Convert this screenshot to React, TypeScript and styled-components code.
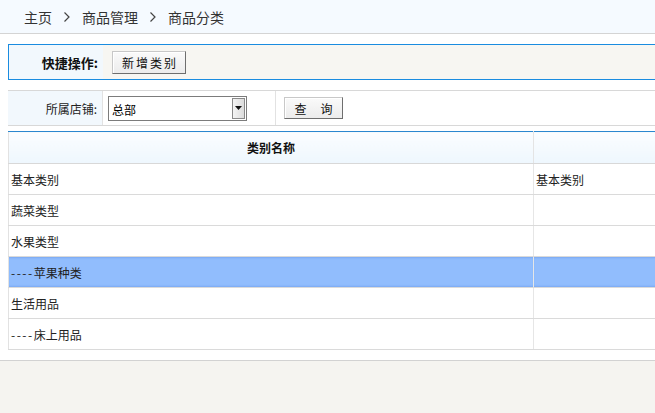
import styled, { createGlobalStyle } from "styled-components";

const GlobalStyle = createGlobalStyle`
  html, body {
    margin: 0;
    padding: 0;
    background: #f5f4f0;
    overflow: hidden;
  }
  body {
    font-family: "Noto Sans CJK SC", "Noto Sans", sans-serif;
    font-size: 12px;
    color: #222;
  }
`;

const categories = [
  { name: "基本类别", parent: "基本类别" },
  { name: "蔬菜类型", parent: "" },
  { name: "水果类型", parent: "" },
  { name: "苹果种类", level: 1, parent: "", selected: true },
  { name: "生活用品", parent: "" },
  { name: "床上用品", level: 1, parent: "" },
];

const Chevron = () => (
  <svg width="8" height="12" viewBox="0 0 8 12">
    <polyline points="1.5,1.5 6,6 1.5,10.5" fill="none" stroke="#444" strokeWidth="1.2" />
  </svg>
);

const App = () => {
  return (
    <>
      <GlobalStyle />
      <Page>
        <Breadcrumb>
          <Crumb>主页</Crumb>
          <Sep>
            <Chevron />
          </Sep>
          <Crumb>商品管理</Crumb>
          <Sep>
            <Chevron />
          </Sep>
          <Crumb>商品分类</Crumb>
        </Breadcrumb>

        <Content>
          <QuickBar>
            <QuickLabel>快捷操作:</QuickLabel>
            <QuickBody>
              <Button $width={74} $height={23}>新增类别</Button>
            </QuickBody>
          </QuickBar>

          <SearchBar>
            <SearchLabel>所属店铺:</SearchLabel>
            <SearchCell $width={173}>
              <FakeSelect>
                <SelectText>总部</SelectText>
                <SelectArrow>
                  <svg width="7" height="4" viewBox="0 0 7 4">
                    <polygon points="0,0 7,0 3.5,4" fill="#111" />
                  </svg>
                </SelectArrow>
              </FakeSelect>
            </SearchCell>
            <SearchCell $width={200} $pad={8}>
              <Button $width={59} $height={22} $spacing={1}>查　询</Button>
            </SearchCell>
          </SearchBar>

          <Table>
            <thead>
              <tr>
                <HeadCell $width={524}>类别名称</HeadCell>
                <HeadCell>&nbsp;</HeadCell>
              </tr>
            </thead>
            <tbody>
              {categories.map((c) => (
                <Row key={c.name} $selected={c.selected}>
                  <Cell $width={524}>
                    {c.level ? <Dashes>{"----".repeat(c.level)}</Dashes> : null}
                    {c.name}
                  </Cell>
                  <Cell>{c.parent}</Cell>
                </Row>
              ))}
            </tbody>
          </Table>
        </Content>
      </Page>
    </>
  );
};

const Page = styled.div`
  width: 800px;
  background: #fff;
  border-bottom: 1px solid #d2d2d2;
  padding-bottom: 10px;
`;

const Breadcrumb = styled.div`
  height: 33px;
  display: flex;
  align-items: center;
  padding-left: 24px;
  background: #f5faff;
  border-bottom: 1px solid #d4d4d4;
  font-size: 14px;
  color: #333;
`;

const Crumb = styled.span`
  line-height: 1;
`;

const Sep = styled.span`
  display: flex;
  align-items: center;
  margin: 0 11px;
`;

const Content = styled.div`
  padding-left: 8px;
`;

const QuickBar = styled.div`
  box-sizing: border-box;
  margin-top: 10px;
  height: 36px;
  display: flex;
  border-top: 1px solid #1a8ce0;
  border-bottom: 1px solid #1a8ce0;
  border-left: 1px solid #1a8ce0;
`;

const QuickLabel = styled.div`
  box-sizing: border-box;
  width: 94px;
  padding-right: 5px;
  display: flex;
  align-items: center;
  justify-content: flex-end;
  background: #f2f8fd;
  font-size: 13px;
  font-weight: bold;
  color: #111;
`;

const QuickBody = styled.div`
  flex: 1;
  display: flex;
  align-items: center;
  padding-left: 9px;
  background: #f7f6f2;
`;

const Button = styled.button<{ $width: number; $height: number; $spacing?: number }>`
  box-sizing: border-box;
  width: ${(p) => p.$width}px;
  height: ${(p) => p.$height}px;
  padding: 0;
  white-space: nowrap;
  font-family: "Noto Sans CJK SC", sans-serif;
  font-size: 12px;
  letter-spacing: ${(p) => p.$spacing ?? 2}px;
  text-indent: ${(p) => p.$spacing ?? 2}px;
  color: #111;
  background: linear-gradient(#fafafa, #ececec);
  border: 1px solid;
  border-color: #c8c8c8 #6e6e6e #6e6e6e #c8c8c8;
  box-shadow: inset 1px 1px 0 #fff;
  cursor: pointer;
`;

const SearchBar = styled.div`
  box-sizing: border-box;
  margin-top: 10px;
  height: 36px;
  display: flex;
  border-top: 1px solid #d8d8d8;
  border-bottom: 1px solid #d8d8d8;
`;

const SearchLabel = styled.div`
  box-sizing: border-box;
  width: 94px;
  padding-right: 5px;
  display: flex;
  align-items: center;
  justify-content: flex-end;
  background: #f2f8fd;
  color: #222;
`;

const SearchCell = styled.div<{ $width: number; $pad?: number }>`
  box-sizing: border-box;
  width: ${(p) => p.$width}px;
  display: flex;
  align-items: center;
  padding-left: ${(p) => p.$pad ?? 5}px;
  border-left: 1px solid #e2e2e2;
`;

const FakeSelect = styled.div`
  box-sizing: border-box;
  width: 139px;
  height: 25px;
  display: flex;
  align-items: stretch;
  border: 1px solid #7c7c7c;
  background: #fff;
`;

const SelectText = styled.span`
  flex: 1;
  display: flex;
  align-items: center;
  padding-left: 3px;
  padding-top: 2px;
  color: #000;
`;

const SelectArrow = styled.span`
  box-sizing: border-box;
  width: 13px;
  margin: 1px;
  display: flex;
  align-items: center;
  justify-content: center;
  border: 1px solid #8a8a8a;
  background: linear-gradient(90deg, #f4f4f4, #dcdcdc);
`;

const Table = styled.table`
  margin-top: 5px;
  width: 792px;
  border-collapse: collapse;
  border-left: 1px solid #e2e2e2;
  table-layout: fixed;
`;

const HeadCell = styled.th<{ $width?: number }>`
  ${(p) => (p.$width ? `width: ${p.$width}px;` : "")}
  height: 31px;
  padding: 0;
  border-top: 1px solid #2b87cf;
  border-bottom: 1px solid #d8d8d8;
  border-right: 1px solid #e4e4e4;
  background: linear-gradient(#fbfdff, #eef7fe);
  font-weight: bold;
  font-size: 12px;
  color: #111;
  text-align: center;
`;

const Row = styled.tr<{ $selected?: boolean }>`
  background: ${(p) => (p.$selected ? "#91bdfd" : "#fff")};
  ${(p) =>
    p.$selected
      ? `td { box-shadow: inset 0 2px 2px -1px #7aa8f2, inset 0 -2px 2px -1px #7aa8f2; border-top: 1px solid #f1e6cf; }`
      : ""}
`;

const Cell = styled.td<{ $width?: number }>`
  ${(p) => (p.$width ? `width: ${p.$width}px;` : "")}
  height: 30px;
  padding: 0 0 0 2px;
  border-bottom: 1px solid #dadada;
  border-right: 1px solid #e6e6e6;
  color: #222;
  font-size: 12px;
  white-space: nowrap;
`;

const Dashes = styled.span`
  letter-spacing: 1.5px;
`;

export default App;
